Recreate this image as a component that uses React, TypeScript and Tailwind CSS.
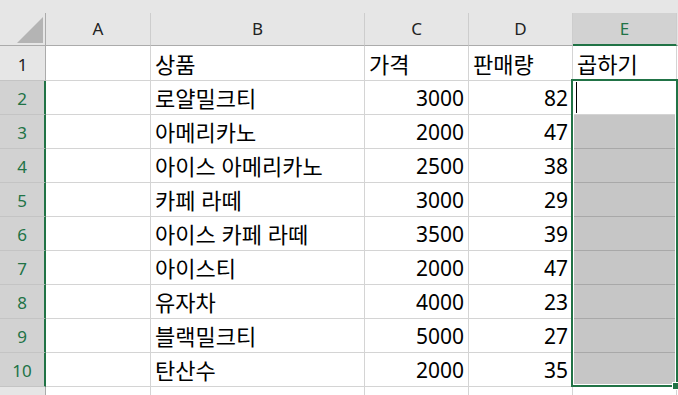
import React from "react";

const columns = ["A", "B", "C", "D", "E"];

const colWidths = ["w-[105px]", "w-[214px]", "w-[104px]", "w-[104px]", "w-[104px]"];

type Row = { name: string; price: string; qty: string; extra?: string };

const rows: Row[] = [
  { name: "상품", price: "가격", qty: "판매량", extra: "곱하기" },
  { name: "로얄밀크티", price: "3000", qty: "82" },
  { name: "아메리카노", price: "2000", qty: "47" },
  { name: "아이스 아메리카노", price: "2500", qty: "38" },
  { name: "카페 라떼", price: "3000", qty: "29" },
  { name: "아이스 카페 라떼", price: "3500", qty: "39" },
  { name: "아이스티", price: "2000", qty: "47" },
  { name: "유자차", price: "4000", qty: "23" },
  { name: "블랙밀크티", price: "5000", qty: "27" },
  { name: "탄산수", price: "2000", qty: "35" },
];

export default function App() {
  return (
    <div className="relative w-[678px] h-[395px] overflow-hidden bg-white font-['Noto_Sans','Noto_Sans_CJK_KR',sans-serif] text-black">
      {/* strip above the headers */}
      <div className="h-[13px] bg-[#e6e6e6]" />

      {/* Column headers */}
      <div className="flex h-[33px] bg-[#e6e6e6] text-[17px] text-[#222]">
        <div className="w-[46px] shrink-0 flex items-end justify-end pr-[2px] pb-[2px] border-r border-b border-[#ababab]">
          <svg width="26" height="26" viewBox="0 0 26 26">
            <polygon points="26,0 26,26 0,26" fill="#b4b4b4" />
          </svg>
        </div>
        {columns.map((col, i) => {
          const selected = col === "E";
          return (
            <div
              key={col}
              className={`${colWidths[i]} shrink-0 flex items-center justify-center border-r border-r-[#cdcdcd] ${
                selected
                  ? "bg-[#d2d2d2] text-[#217346] border-b-2 border-b-[#217346]"
                  : "border-b border-b-[#ababab]"
              }`}
            >
              {col}
            </div>
          );
        })}
        <div className="flex-1 border-b border-b-[#ababab]" />
      </div>

      {/* Body rows */}
      {rows.map((row, r) => {
        const selected = r > 0;
        const isFirst = r === 0;
        // Korean labels run a touch larger than the digits
        const cellText = isFirst ? "pl-[4px] text-[22px]" : "justify-end pr-[4px]";
        return (
          <div key={r} className={`flex ${isFirst ? "h-[35px]" : "h-[34px]"} text-[21px] leading-[21px]`}>
            <div
              className={`w-[46px] shrink-0 flex items-end justify-center pb-[5px] text-[17px] border-b border-b-[#c4c4c4] ${
                selected
                  ? "bg-[#d2d2d2] text-[#217346] border-r-2 border-r-[#217346]"
                  : "bg-[#e6e6e6] text-[#222] border-r border-r-[#ababab]"
              }`}
            >
              {r + 1}
            </div>
            <div className="w-[105px] shrink-0 border-r border-b border-[#d4d4d4]" />
            <div className="w-[214px] shrink-0 flex items-end pb-[5px] pl-[4px] text-[22px] whitespace-nowrap border-r border-b border-[#d4d4d4]">
              {row.name}
            </div>
            <div
              className={`w-[104px] shrink-0 flex items-end pb-[5px] whitespace-nowrap border-r border-b border-[#d4d4d4] ${cellText}`}
            >
              {row.price}
            </div>
            <div
              className={`w-[104px] shrink-0 flex items-end pb-[5px] whitespace-nowrap border-r border-b border-[#d4d4d4] ${cellText}`}
            >
              {row.qty}
            </div>
            {isFirst ? (
              <div className="w-[104px] shrink-0 flex items-end pb-[5px] pl-[4px] text-[22px] whitespace-nowrap border-r border-b border-[#d4d4d4]">
                {row.extra}
              </div>
            ) : r === 1 ? (
              <div className="w-[104px] shrink-0 flex items-start pl-[3px] border-r border-b border-[#d4d4d4]">
                {/* text caret */}
                <span className="block w-px h-[32px] bg-black" />
              </div>
            ) : (
              <div className="w-[104px] shrink-0 bg-[#c6c6c6] border-r border-b border-r-[#d4d4d4] border-b-[#a8a8a8]" />
            )}
            <div className="flex-1 border-b border-[#d4d4d4]" />
          </div>
        );
      })}

      {/* Row 11, cut off */}
      <div className="flex h-[20px]">
        <div className="w-[46px] shrink-0 bg-[#e6e6e6] border-r border-r-[#ababab]" />
        {colWidths.map((w, i) => (
          <div key={i} className={`${w} shrink-0 border-r border-[#d4d4d4]`} />
        ))}
        <div className="flex-1" />
      </div>

      {/* Selection outline E2:E10 */}
      <div className="absolute left-[571px] top-[79px] w-[107px] h-[308px] border-2 border-[#217346] shadow-[inset_0_0_0_1px_#ffffff] pointer-events-none" />
      {/* Fill handle */}
      <div className="absolute left-[672px] top-[382px] w-[8px] h-[8px] bg-[#217346] border border-white" />
    </div>
  );
}
